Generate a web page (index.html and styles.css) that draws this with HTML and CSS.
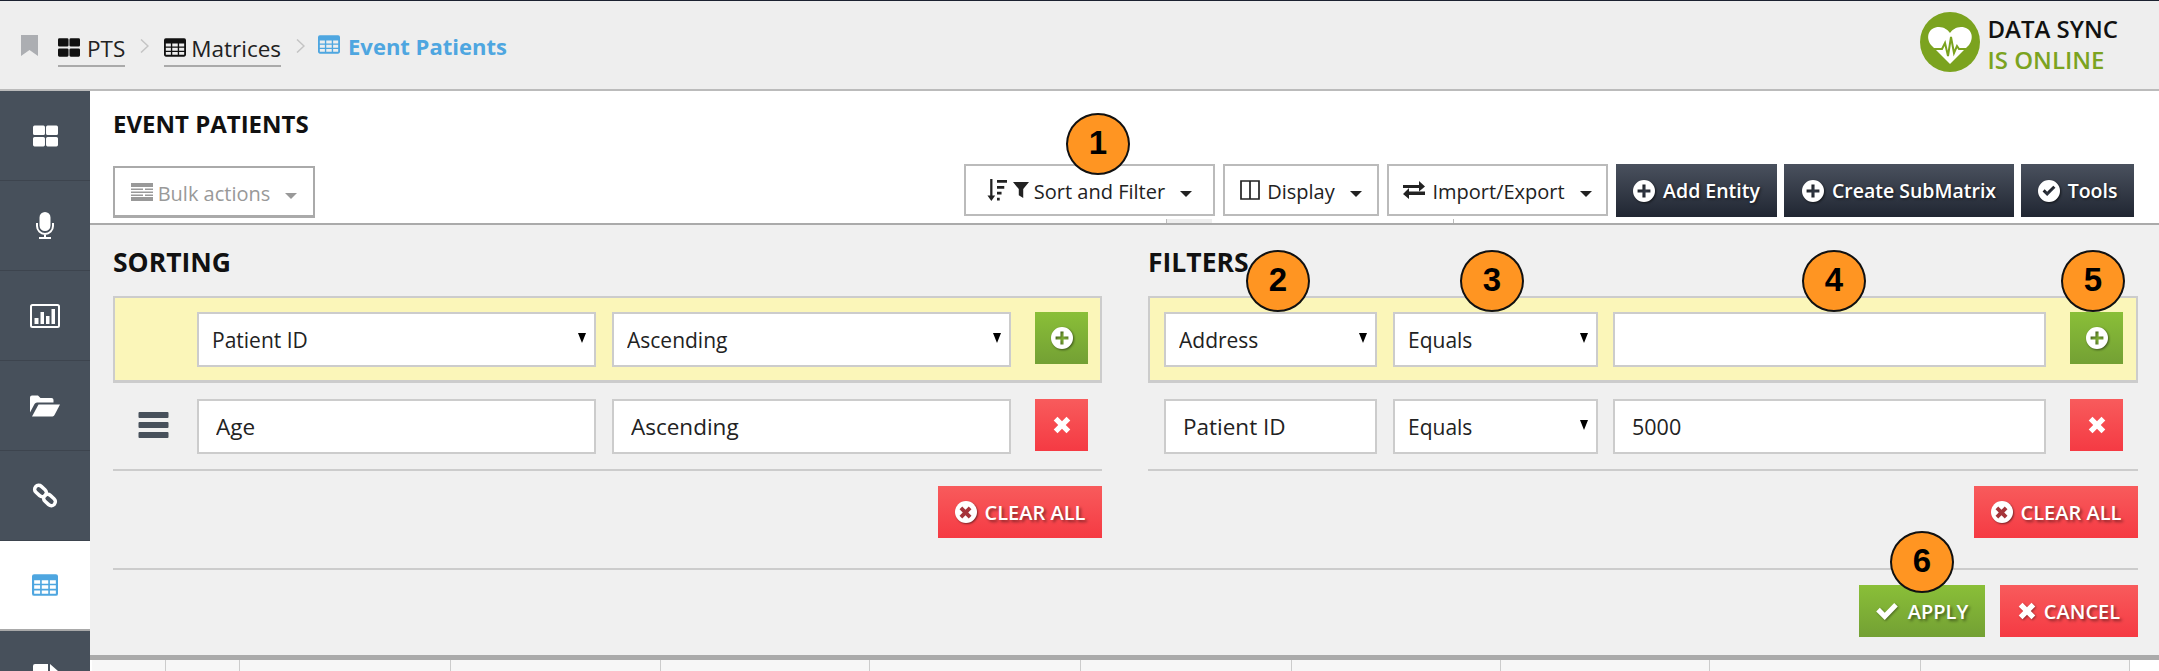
FILE: index.html
```html
<!DOCTYPE html>
<html lang="en">
<head>
    <meta charset="UTF-8">
    <title>Event Patients</title>
    <link rel="stylesheet" href="styles.css">
</head>
<body>
    <svg class="defs" width="0" height="0">
        <symbol id="i-grid" viewBox="0 0 24 20"><path d="M1.500 0h8.500a1.500 1.500 0 0 1 1.500 1.500v6a1.500 1.500 0 0 1-1.500 1.500h-8.500a1.500 1.500 0 0 1-1.500-1.500v-6a1.500 1.500 0 0 1 1.500-1.500zM14 0h8.500a1.500 1.500 0 0 1 1.500 1.500v6a1.500 1.500 0 0 1-1.500 1.500h-8.500a1.500 1.500 0 0 1-1.500-1.500v-6a1.500 1.500 0 0 1 1.500-1.500zM1.500 11h8.500a1.500 1.500 0 0 1 1.500 1.500v6a1.500 1.500 0 0 1-1.500 1.500h-8.500a1.500 1.500 0 0 1-1.500-1.500v-6a1.500 1.500 0 0 1 1.500-1.500zM14 11h8.500a1.500 1.500 0 0 1 1.500 1.500v6a1.500 1.500 0 0 1-1.500 1.500h-8.500a1.500 1.500 0 0 1-1.500-1.500v-6a1.500 1.500 0 0 1 1.500-1.500z"/></symbol>
        <symbol id="i-table" viewBox="0 0 24 20"><path fill-rule="evenodd" d="M2 0h20a2 2 0 0 1 2 2v16a2 2 0 0 1-2 2h-20a2 2 0 0 1-2-2v-16a2 2 0 0 1 2-2zM2 5.500v3.300h5.500v-3.300zM9 5.500v3.300h6v-3.300zM16.500 5.500v3.300h5.500v-3.300zM2 10.300v3.200h5.500v-3.200zM9 10.300v3.200h6v-3.200zM16.500 10.300v3.200h5.500v-3.200zM2 15v3h5.500v-3zM9 15v3h6v-3zM16.500 15v3h5.500v-3z"/></symbol>
        <symbol id="i-plus-circle" viewBox="0 0 24 24"><path fill-rule="evenodd" d="M12 0a12 12 0 1 1 0 24a12 12 0 0 1 0-24zM10.300 5v5.300h-5.300v3.400h5.300v5.300h3.400v-5.300h5.300v-3.400h-5.300v-5.300z"/></symbol>
        <symbol id="i-check-circle" viewBox="0 0 24 24"><path fill-rule="evenodd" d="M12 0a12 12 0 1 1 0 24a12 12 0 0 1 0-24zM5 12.500l5 5l9-9l-2.300-2.300l-6.700 6.700l-2.700-2.700z"/></symbol>
        <symbol id="i-times" viewBox="0 0 20 20"><path d="M5 .8l5 5l5-5l4.200 4.200l-5 5l5 5l-4.200 4.200l-5-5l-5 5l-4.200-4.200l5-5l-5-5z"/></symbol>
        <symbol id="i-check" viewBox="0 0 24 20"><path d="M0 10.500l4-4l5.500 5.500l10.500-11l4 4l-14.500 15z"/></symbol>
    </svg>

    <div class="page">
        <header class="topbar">
            <nav class="crumbs">
                <svg class="bookmark" viewBox="0 0 17 21"><path d="M0 0h17v21l-8.500-6l-8.500 6z"/></svg>
                <a class="crumb"><svg class="crumb-icon"><use href="#i-grid"/></svg>PTS</a>
                <svg class="crumb-sep" viewBox="0 0 9 14"><path d="M1 .500l7 6.500l-7 6.500" fill="none" stroke="#c4c4c4" stroke-width="1.500"/></svg>
                <a class="crumb crumb-tight"><svg class="crumb-icon"><use href="#i-table"/></svg>Matrices</a>
                <svg class="crumb-sep crumb-sep-last" viewBox="0 0 9 14"><path d="M1 .500l7 6.500l-7 6.500" fill="none" stroke="#c4c4c4" stroke-width="1.500"/></svg>
                <span class="crumb-current"><svg class="crumb-icon"><use href="#i-table"/></svg>Event Patients</span>
            </nav>
            <div class="sync">
                <svg class="sync-logo" viewBox="0 0 60 60">
                    <circle cx="30" cy="30" r="30" fill="#7ba31f"/>
                    <path d="M30 52L11 33C5 25 9 15 19 15C24 15 28 18 30 21C32 18 36 15 41 15C51 15 55 25 49 33Z" fill="#fff"/>
                    <path d="M8 37H22L25 31L28 44L31 25L34 41L37 34L39 37H52" fill="none" stroke="#7ba31f" stroke-width="2"/>
                </svg>
                <div class="sync-text">
                    <div>DATA SYNC</div>
                    <div class="sync-state">IS ONLINE</div>
                </div>
            </div>
        </header>

        <div class="body">
            <aside class="sidebar">
                <div class="side-item"><svg class="side-icon side-grid"><use href="#i-grid"/></svg></div>
                <div class="side-item">
                    <svg class="side-icon side-mic" viewBox="0 0 20 27"><path d="M10 0a5.500 5.500 0 0 1 5.500 5.500v8a5.500 5.500 0 0 1-11 0v-8a5.500 5.500 0 0 1 5.500-5.500z"/><path d="M2 11v3a8 8 0 0 0 16 0v-3M10 22v3M4 26h12" fill="none" stroke="#fff" stroke-width="2"/></svg>
                </div>
                <div class="side-item">
                    <svg class="side-icon side-chart" viewBox="0 0 30 24"><rect x="1" y="1" width="28" height="22" rx="1.500" fill="none" stroke="#fff" stroke-width="2"/><path d="M4.500 14h4v6h-4zM10.500 8h3.500v12h-3.500zM16 12h3.500v8h-3.500zM21.500 5h3.500v15h-3.500z"/></svg>
                </div>
                <div class="side-item">
                    <svg class="side-icon side-folder" viewBox="0 0 30 22"><path d="M0 2.500a2 2 0 0 1 2-2h6l2.500 2.500h11a2 2 0 0 1 2 2v2.500h-16.500a3 3 0 0 0-2.500 1.500l-4.500 8.500z"/><path d="M8.500 9.500h21.500l-5.500 10.500a3 3 0 0 1-2 1.500h-20.500z"/></svg>
                </div>
                <div class="side-item">
                    <svg class="side-icon side-link" viewBox="0 0 26 25"><g fill="none" stroke="#fff" stroke-width="3.500"><rect x="2" y="4" width="13" height="8" rx="4" transform="rotate(42 8.500 8)"/><rect x="11" y="13" width="13" height="8" rx="4" transform="rotate(42 17.500 17)"/></g></svg>
                </div>
                <div class="side-item side-active"><svg class="side-icon side-table"><use href="#i-table"/></svg></div>
                <div class="side-item">
                    <svg class="side-icon side-file" viewBox="0 0 25 30"><path d="M2 0h13v9h10v19a2 2 0 0 1-2 2h-21a2 2 0 0 1-2-2v-26a2 2 0 0 1 2-2zM17 0l8 7h-8z"/></svg>
                </div>
            </aside>

            <main class="main">
                <section class="head">
                    <h1 class="title">EVENT PATIENTS</h1>
                    <div class="toolbar">
                        <button class="btn btn-bulk">
                            <svg class="ico-bulk" viewBox="0 0 22 18"><path d="M0 0h22v4h-22zM0 5.500h12v1.500h-12zM14 5.500h8v1.500h-8zM0 8.500h22v1.500h-22zM0 11.500h12v1.500h-12zM14 11.500h8v1.500h-8zM0 14h22v4h-22z"/></svg>
                            <span class="btn-label">Bulk actions</span><span class="caret caret-bulk"></span>
                        </button>
                        <div class="tools">
                            <button class="btn btn-sort">
                                <svg class="ico-sort" viewBox="0 0 22 24"><path d="M3.500 0h2.500v18h3l-4.200 6l-4.300-6h3zM11 1h11v3h-11zM11 7.500h8v3h-8zM11 14h5v3h-5zM11 20.500h3v3h-3z"/></svg>
                                <svg class="ico-filter" viewBox="0 0 18 18"><path d="M0 0h18l-6.500 8v10l-5-3v-7z"/></svg>
                                <span class="btn-label">Sort and Filter</span><span class="caret"></span>
                            </button>
                            <button class="btn btn-display">
                                <svg class="ico-columns" viewBox="0 0 20 20"><path d="M1 1h18v18h-18zM10 1v18" fill="none" stroke="#222" stroke-width="1.700"/></svg>
                                <span class="btn-label">Display</span><span class="caret"></span>
                            </button>
                            <button class="btn btn-import">
                                <svg class="ico-exchange" viewBox="0 0 22 18"><path d="M0 4h16v-4l6 5.500l-6 5v-3.500h-16zM22 10.500h-16v-3.500h0l-6 6l6 5v-4h16z"/></svg>
                                <span class="btn-label">Import/Export</span><span class="caret"></span>
                            </button>
                            <button class="btn-dark btn-add"><svg class="ico-circle"><use href="#i-plus-circle"/></svg>Add Entity</button>
                            <button class="btn-dark btn-sub"><svg class="ico-circle"><use href="#i-plus-circle"/></svg>Create SubMatrix</button>
                            <button class="btn-dark btn-tools"><svg class="ico-circle"><use href="#i-check-circle"/></svg>Tools</button>
                        </div>
                    </div>
                    <span class="peek"></span>
                    <span class="tick"></span>
                </section>

                <section class="panel">
                    <div class="panel-cols">
                        <div class="col">
                            <h2 class="col-title">SORTING</h2>
                            <div class="row row-new">
                                <span class="handle"></span>
                                <div class="select w-sort-field"><select><option>Patient ID</option></select></div>
                                <div class="select w-sort-dir"><select><option>Ascending</option></select></div>
                                <button class="sq sq-green"><svg><use href="#i-plus-circle"/></svg></button>
                            </div>
                            <div class="row">
                                <span class="handle"><svg class="ico-bars" viewBox="0 0 30 26"><path d="M1 0h28a1 1 0 0 1 1 1v4a1 1 0 0 1-1 1h-28a1 1 0 0 1-1-1v-4a1 1 0 0 1 1-1zM1 10h28a1 1 0 0 1 1 1v4a1 1 0 0 1-1 1h-28a1 1 0 0 1-1-1v-4a1 1 0 0 1 1-1zM1 20h28a1 1 0 0 1 1 1v4a1 1 0 0 1-1 1h-28a1 1 0 0 1-1-1v-4a1 1 0 0 1 1-1z"/></svg></span>
                                <input class="field w-sort-field" value="Age">
                                <input class="field w-sort-dir" value="Ascending">
                                <button class="sq sq-red"><svg><use href="#i-times"/></svg></button>
                            </div>
                            <div class="col-foot">
                                <button class="btn-flat red btn-clear"><span class="clear-dot"><svg><use href="#i-times"/></svg></span>CLEAR ALL</button>
                            </div>
                        </div>

                        <div class="col">
                            <h2 class="col-title">FILTERS</h2>
                            <div class="row row-new row-filter">
                                <div class="select w-f-field"><select><option>Address</option></select></div>
                                <div class="select w-f-op"><select><option>Equals</option></select></div>
                                <input class="field w-f-value" value="">
                                <button class="sq sq-green"><svg><use href="#i-plus-circle"/></svg></button>
                            </div>
                            <div class="row row-filter">
                                <input class="field w-f-field" value="Patient ID">
                                <div class="select w-f-op"><select><option>Equals</option></select></div>
                                <input class="field w-f-value field-sm" value="5000">
                                <button class="sq sq-red"><svg><use href="#i-times"/></svg></button>
                            </div>
                            <div class="col-foot">
                                <button class="btn-flat red btn-clear"><span class="clear-dot"><svg><use href="#i-times"/></svg></span>CLEAR ALL</button>
                            </div>
                        </div>
                    </div>

                    <div class="panel-foot">
                        <button class="btn-flat green btn-apply"><svg class="ico-check"><use href="#i-check"/></svg>APPLY</button>
                        <button class="btn-flat red btn-cancel"><svg class="ico-times"><use href="#i-times"/></svg>CANCEL</button>
                    </div>
                </section>

                <div class="grid-peek">
                    <span class="c74"></span><span class="c74"></span><span class="c211"></span><span class="c210"></span><span class="c209"></span><span class="c211"></span><span class="c211"></span><span class="c209"></span><span class="c209"></span><span class="c211"></span><span class="c209"></span>
                </div>
            </main>
        </div>

        <!-- numbered callouts sit on top of the screen -->
        <span class="badge b1">1</span>
        <span class="badge b2">2</span>
        <span class="badge b3">3</span>
        <span class="badge b4">4</span>
        <span class="badge b5">5</span>
        <span class="badge b6">6</span>
    </div>
</body>
</html>
```

FILE: styles.css
```css
* {
    box-sizing: border-box;
}

html, body {
    margin: 0;
    padding: 0;
}

body {
    font-family: "Open Sans", "Liberation Sans", sans-serif;
    color: #111;
    background: #fff;
    overflow: hidden;
}

.defs {
    position: absolute;
}

.page {
    position: relative;
    width: 2159px;
    height: 671px;
    overflow: hidden;
    display: flex;
    flex-direction: column;
}

/* --- Top bar --- */
.topbar {
    height: 91px;
    flex: none;
    background: #eee;
    border-top: 1px solid #1b2130;
    border-bottom: 2px solid #bbb;
    display: flex;
    justify-content: space-between;
    padding: 0 41px 0 21px;
}

.crumbs {
    display: flex;
    align-items: center;
    font-size: 22.500px;
    padding-top: 1px;
}

.bookmark {
    width: 17px;
    height: 21px;
    fill: #acaeb2;
    margin-right: 20px;
}

.crumb {
    display: flex;
    align-items: center;
    gap: 7px;
    height: 34px;
    margin-top: 8px;
    border-bottom: 2px solid #aaa;
    color: #222;
    font-weight: 400;
}

.crumb-tight {
    gap: 5px;
}

.crumb-icon {
    width: 22px;
    height: 19px;
    fill: #111;
    margin-top: -2px;
}

.crumb-sep {
    width: 9px;
    height: 14px;
    margin: 0 15px;
}

.crumb-sep-last {
    margin-right: 13px;
}

.crumb-current {
    display: flex;
    align-items: center;
    gap: 8px;
    color: #4ea6e0;
    font-weight: 700;
    font-size: 22px;
}

.crumb-current .crumb-icon {
    fill: #4ea6e0;
}

.sync {
    display: flex;
    gap: 7px;
    padding-top: 11px;
}

.sync-logo {
    width: 60px;
    height: 60px;
}

.sync-text {
    font-size: 24px;
    font-weight: 600;
    line-height: 31px;
    color: #111;
    padding-top: 1px;
}

.sync-state {
    color: #7ba31f;
}

/* --- Sidebar --- */
.body {
    flex: 1;
    display: flex;
    min-height: 0;
}

.sidebar {
    width: 90px;
    flex: none;
    background: #47505b;
}

.side-item {
    height: 90px;
    border-bottom: 1px solid #3d444e;
    display: flex;
    align-items: center;
    justify-content: center;
}

.side-active {
    background: #fff;
    border-bottom: 2px solid #a9a9a9;
}

.side-icon {
    fill: #fff;
}

.side-grid {
    width: 25px;
    height: 22px;
}

.side-mic {
    width: 20px;
    height: 27px;
}

.side-chart {
    width: 30px;
    height: 24px;
}

.side-folder {
    width: 30px;
    height: 22px;
}

.side-link {
    width: 26px;
    height: 25px;
}

.side-table {
    width: 26px;
    height: 22px;
    fill: #4ea6e0;
}

.side-file {
    width: 25px;
    height: 30px;
    align-self: flex-start;
    margin-top: 33px;
}

/* --- Heading and toolbar --- */
.main {
    flex: 1;
    min-width: 0;
    display: flex;
    flex-direction: column;
}

.head {
    position: relative;
    height: 134px;
    flex: none;
    padding: 18px 25px 0 23px;
    border-bottom: 2px solid #aaa;
}

.title {
    margin: 0;
    font-size: 24px;
    line-height: 30px;
    font-weight: 700;
    color: #111;
}

.toolbar {
    display: flex;
    justify-content: space-between;
    align-items: flex-start;
    margin-top: 25px;
}

.tools {
    display: flex;
    gap: 8px;
}

button {
    font-family: inherit;
    border: 0;
    padding: 0;
    cursor: pointer;
}

.btn {
    height: 52px;
    background: #fff;
    border: 2px solid #bbb;
    color: #222;
    font-size: 20px;
    display: flex;
    align-items: center;
    justify-content: center;
    gap: 5px;
}

.btn-label {
    padding-top: 2px;
}

.btn-bulk {
    width: 202px;
    margin-top: 2px;
    color: #999;
    border-color: #aaa;
    border-bottom-width: 3px;
}

.btn-bulk .btn-label {
    padding-top: 3px;
}

.ico-bulk {
    width: 22px;
    height: 18px;
    fill: #999;
}

.btn-sort {
    width: 251px;
}

.btn-display {
    width: 156px;
}

.btn-import {
    width: 221px;
}

.ico-sort {
    width: 20px;
    height: 22px;
    fill: #222;
}

.ico-filter {
    width: 16px;
    height: 16px;
    fill: #222;
    margin-left: 1px;
}

.ico-columns {
    width: 20px;
    height: 20px;
    margin-right: 2px;
}

.ico-exchange {
    width: 22px;
    height: 18px;
    fill: #222;
    margin-right: 2px;
}

.caret {
    width: 0;
    height: 0;
    margin-left: 10px;
    margin-top: 8px;
    border-left: 6px solid transparent;
    border-right: 6px solid transparent;
    border-top: 6px solid #222;
}

.caret-bulk {
    border-top-color: #999;
}

.btn-dark {
    height: 53px;
    background: linear-gradient(#4a515e, #202632);
    color: #fff;
    font-size: 19.500px;
    font-weight: 600;
    text-shadow: 1px 1px 3px rgba(0, 0, 0, .6);
    display: flex;
    align-items: center;
    justify-content: center;
    gap: 8px;
}

.btn-dark + .btn-dark {
    margin-left: -1px;
}

.btn-add {
    width: 161px;
}

.btn-sub {
    width: 230px;
}

.btn-tools {
    width: 113px;
}

.ico-circle {
    width: 22px;
    height: 22px;
    fill: #fff;
    filter: drop-shadow(1px 1px 1px rgba(0, 0, 0, .6));
}

.peek {
    position: absolute;
    left: 1076px;
    bottom: 0;
    width: 46px;
    height: 4px;
    background: #eee;
    border-left: 1px solid #bbb;
}

.tick {
    position: absolute;
    left: 1363px;
    bottom: 0;
    width: 1px;
    height: 4px;
    background: #bbb;
}

/* --- Sort and filter panel --- */
.panel {
    height: 435px;
    flex: none;
    background: #f0f0f0;
    padding: 0 21px 0 23px;
    border-bottom: 5px solid #aaa;
}

.panel-cols {
    display: flex;
    gap: 46px;
}

.col {
    width: 990px;
}

.col:first-child {
    width: 989px;
}

.col-title {
    margin: 0;
    height: 71px;
    padding-top: 20px;
    font-size: 26.500px;
    line-height: 34px;
    font-weight: 700;
    color: #111;
}

.row {
    display: flex;
    align-items: flex-start;
    margin-top: 16px;
    padding-bottom: 15px;
    border-bottom: 2px solid #ccc;
}

.row-new {
    margin-top: 0;
    height: 87px;
    padding-top: 14px;
    padding-bottom: 0;
    background: #fbf6b9;
    border: 2px solid #ccc;
    border-bottom-width: 3px;
}

.row-filter {
    padding-left: 16px;
}

.row-new.row-filter {
    padding-left: 14px;
}

.handle {
    width: 84px;
    flex: none;
    display: flex;
    padding: 13px 0 0 25px;
}

.row-new .handle {
    width: 82px;
}

.ico-bars {
    width: 31px;
    height: 26px;
    fill: #47505b;
}

.select {
    position: relative;
    height: 55px;
    flex: none;
}

.select::after {
    content: "";
    position: absolute;
    right: 10px;
    top: 21px;
    border-left: 4.500px solid transparent;
    border-right: 4.500px solid transparent;
    border-top: 10px solid #000;
}

.select select {
    appearance: none;
    width: 100%;
    height: 100%;
    margin: 0;
    padding: 0 13px;
    background: #fff;
    border: 2px solid #ccc;
    border-radius: 0;
    font-family: inherit;
    font-size: 21px;
    color: #222;
}

.field {
    height: 55px;
    flex: none;
    margin: 0;
    padding: 0 17px;
    background: #fff;
    border: 2px solid #ccc;
    font-family: inherit;
    font-size: 22.500px;
    color: #222;
}

.field-sm {
    font-size: 21.500px;
}

.w-sort-field {
    width: 399px;
    margin-right: 16px;
}

.w-sort-dir {
    width: 399px;
    margin-right: 24px;
}

.w-f-field {
    width: 213px;
    margin-right: 16px;
}

.w-f-op {
    width: 205px;
    margin-right: 15px;
}

.w-f-value {
    width: 433px;
    margin-right: 24px;
}

.sq {
    width: 53px;
    height: 52px;
    flex: none;
    display: flex;
    align-items: center;
    justify-content: center;
}

.sq svg {
    width: 20px;
    height: 20px;
    fill: #fff;
    filter: drop-shadow(1px 1px 1px rgba(0, 0, 0, .5));
}

.sq-green {
    background: linear-gradient(#8abf38, #73a034);
}

.sq-green svg {
    width: 22px;
    height: 22px;
}

.sq-red {
    background: linear-gradient(#f85b5c, #f53a43);
}

.sq-red svg {
    width: 18px;
    height: 18px;
    filter: none;
}

.col-foot {
    display: flex;
    justify-content: flex-end;
    margin-top: 15px;
}

.btn-flat {
    height: 52px;
    color: #fff;
    font-size: 20px;
    font-weight: 600;
    text-shadow: 2px 2px 3px rgba(0, 0, 0, .45);
    display: flex;
    align-items: center;
    justify-content: center;
}

.btn-flat.red {
    background: linear-gradient(#f85b5c, #f53a43);
}

.btn-flat.green {
    background: linear-gradient(#8abf38, #73a034);
}

.btn-clear {
    width: 164px;
    gap: 8px;
}

.clear-dot {
    width: 22px;
    height: 22px;
    border-radius: 50%;
    background: #fff;
    box-shadow: 1px 1px 2px rgba(0, 0, 0, .5);
    display: flex;
    align-items: center;
    justify-content: center;
}

.clear-dot svg {
    width: 13px;
    height: 13px;
    fill: #a5343a;
}

.panel-foot {
    display: flex;
    justify-content: flex-end;
    gap: 15px;
    margin-top: 30px;
    padding-top: 15px;
    border-top: 2px solid #ccc;
}

.btn-apply {
    width: 126px;
    gap: 10px;
}

.btn-cancel {
    width: 138px;
    gap: 8px;
}

.ico-check {
    width: 22px;
    height: 18px;
    fill: #fff;
    filter: drop-shadow(1px 1px 1px rgba(0, 0, 0, .4));
}

.ico-times {
    width: 18px;
    height: 18px;
    fill: #fff;
    filter: drop-shadow(1px 1px 1px rgba(0, 0, 0, .4));
}

/* --- Matrix peeking out under the panel --- */
.grid-peek {
    flex: 1;
    display: flex;
    margin-left: 2px;
}

.grid-peek span {
    flex: none;
    height: 100%;
    background: #f7f7f7;
    border-right: 1px solid #ccc;
}

.c74 { width: 74px; }
.c209 { width: 209px; }
.c210 { width: 210px; }
.c211 { width: 211px; }

/* --- Numbered callouts --- */
.badge {
    position: absolute;
    width: 64px;
    height: 62px;
    border: 2px solid #111;
    border-radius: 50%;
    background: #ff9522;
    color: #000;
    font-family: "Liberation Sans", sans-serif;
    font-size: 33px;
    font-weight: 700;
    line-height: 56px;
    text-align: center;
}

.b1 { left: 1066px; top: 113px; }
.b2 { left: 1246px; top: 250px; }
.b3 { left: 1460px; top: 250px; }
.b4 { left: 1802px; top: 250px; }
.b5 { left: 2061px; top: 250px; }
.b6 { left: 1890px; top: 531px; }
```
